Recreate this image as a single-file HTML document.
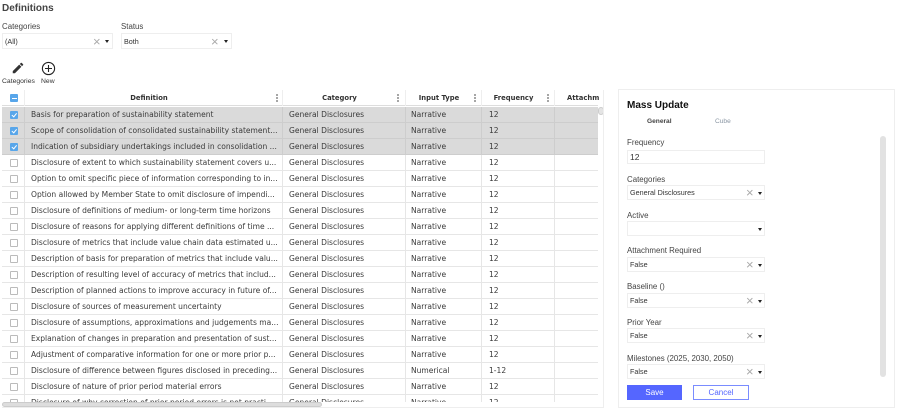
<!DOCTYPE html>
<html><head><meta charset="utf-8">
<style>
html,body{margin:0;padding:0;width:897px;height:412px;overflow:hidden;background:#fff;font-family:"Liberation Sans",sans-serif;color:#333}
.a{position:absolute;white-space:nowrap}
.lbl{font-size:7.9px;color:#444}
.box{position:absolute;background:#fff;border:1px solid #eee;box-sizing:border-box}
.x{position:absolute;color:#aaa;font-size:13px;line-height:10px}
.car{position:absolute;width:0;height:0;border-left:2px solid transparent;border-right:2px solid transparent;border-top:3px solid #222}
#grid{position:absolute;left:2px;top:90px;width:598px;height:312px;overflow:hidden}
.row{position:absolute;left:0;width:596px;height:16px;border-bottom:1px solid #e6e6e6;box-sizing:border-box;font-family:"DejaVu Sans",sans-serif;font-size:7.55px;line-height:16px;color:#3a3a3a}
.row.s{background:#dadada;border-bottom:1px solid #cdcdcd}
.row span{position:absolute;top:0;white-space:nowrap;overflow:hidden}
.c1{left:29px;width:250px}.c2{left:287px}.c3{left:409px}.c4{left:487px}
.v{position:absolute;top:0;width:1px;height:16px;background:#e6e6e6}
.s .v{background:#cdcdcd}
.cb{position:absolute;left:8px;top:4px;width:6px;height:6px;border:1px solid #bbb;border-radius:1px;background:#fff;box-sizing:content-box}
.s .cb{background:#58a6ea;border-color:#58a6ea;color:#fff}
.s .cb:after{content:"";position:absolute;left:2px;top:0;width:1.5px;height:3.5px;border:solid #fff;border-width:0 1px 1px 0;transform:rotate(40deg)}
.hd{position:absolute;top:0;height:16px;font-family:"DejaVu Sans",sans-serif;font-weight:bold;font-size:6.8px;line-height:17px;color:#333;text-align:center;white-space:nowrap}
.dots{position:absolute;top:4px;width:2px;height:8px;background:radial-gradient(circle at 1px 1px,#888 .9px,transparent 1px) 0 0/2px 3px repeat-y}
.sel{position:absolute;left:627px;width:138px;height:15px;background:#fff;border:1px solid #eee;box-sizing:border-box;font-size:7.2px;line-height:13px;padding-left:2px;color:#333}
</style></head><body>
<div class="a" style="left:2px;top:3px;font-size:10px;font-weight:bold;color:#444">Definitions</div>
<div class="a lbl" style="left:2px;top:22px">Categories</div>
<div class="a lbl" style="left:121px;top:22px">Status</div>
<div class="box" style="left:2px;top:33px;width:111px;height:16px"></div>
<div class="a" style="left:5px;top:37px;font-size:7.2px">(All)</div>
<div class="x" style="left:93px;top:37px">×</div><div class="car" style="left:105px;top:40px"></div>
<div class="box" style="left:121px;top:33px;width:111px;height:16px"></div>
<div class="a" style="left:124px;top:37px;font-size:7.2px">Both</div>
<div class="x" style="left:211px;top:37px">×</div><div class="car" style="left:224px;top:40px"></div>

<svg class="a" style="left:11px;top:61px" width="14" height="14" viewBox="0 0 24 24"><path fill="#333" d="M3 17.25V21h3.75L17.81 9.94l-3.75-3.75L3 17.25zM20.71 7.04a1 1 0 0 0 0-1.41l-2.34-2.34a1 1 0 0 0-1.41 0l-1.83 1.83 3.75 3.75 1.83-1.83z"/></svg>
<svg class="a" style="left:41px;top:61px" width="15" height="15" viewBox="0 0 15 15"><circle cx="7.5" cy="7.5" r="6.1" fill="none" stroke="#222" stroke-width="1.1"/><path d="M7.5 4v7M4 7.5h7" stroke="#222" stroke-width="1.1"/></svg>
<div class="a" style="left:2px;top:77.5px;font-size:6.8px;color:#333">Categories</div>
<div class="a" style="left:41px;top:77.5px;font-size:6.8px;color:#333">New</div>

<div id="grid">
<div style="position:absolute;left:0;top:0;width:596px;height:16px;background:#fff;border-bottom:1px solid #ddd;box-sizing:border-box"></div>
<div style="position:absolute;left:8px;top:4px;width:8px;height:8px;background:#58a6ea;border-radius:1px"><div style="position:absolute;left:1.5px;top:3.5px;width:5px;height:1.2px;background:#fff"></div></div>
<div class="v" style="left:22px;background:#eee"></div><div class="v" style="left:280px;background:#eee"></div><div class="v" style="left:403px;background:#eee"></div><div class="v" style="left:479px;background:#eee"></div><div class="v" style="left:552px;background:#eee"></div>
<div class="hd" style="left:23px;width:248px">Definition</div><div class="dots" style="left:274px"></div>
<div class="hd" style="left:281px;width:113px">Category</div><div class="dots" style="left:395px"></div>
<div class="hd" style="left:404px;width:66px">Input Type</div><div class="dots" style="left:472px"></div>
<div class="hd" style="left:480px;width:63px">Frequency</div><div class="dots" style="left:545px"></div>
<div class="hd" style="left:565px;text-align:left">Attachm</div>

<div class="row s" style="top:17px"><i class="cb"></i><b class="v" style="left:22px"></b><b class="v" style="left:280px"></b><b class="v" style="left:403px"></b><b class="v" style="left:479px"></b><b class="v" style="left:552px"></b><span class="c1">Basis for preparation of sustainability statement</span><span class="c2">General Disclosures</span><span class="c3">Narrative</span><span class="c4">12</span></div>
<div class="row s" style="top:33px"><i class="cb"></i><b class="v" style="left:22px"></b><b class="v" style="left:280px"></b><b class="v" style="left:403px"></b><b class="v" style="left:479px"></b><b class="v" style="left:552px"></b><span class="c1">Scope of consolidation of consolidated sustainability statement...</span><span class="c2">General Disclosures</span><span class="c3">Narrative</span><span class="c4">12</span></div>
<div class="row s" style="top:49px"><i class="cb"></i><b class="v" style="left:22px"></b><b class="v" style="left:280px"></b><b class="v" style="left:403px"></b><b class="v" style="left:479px"></b><b class="v" style="left:552px"></b><span class="c1">Indication of subsidiary undertakings included in consolidation ...</span><span class="c2">General Disclosures</span><span class="c3">Narrative</span><span class="c4">12</span></div>
<div class="row" style="top:65px"><i class="cb"></i><b class="v" style="left:22px"></b><b class="v" style="left:280px"></b><b class="v" style="left:403px"></b><b class="v" style="left:479px"></b><b class="v" style="left:552px"></b><span class="c1">Disclosure of extent to which sustainability statement covers u...</span><span class="c2">General Disclosures</span><span class="c3">Narrative</span><span class="c4">12</span></div>
<div class="row" style="top:81px"><i class="cb"></i><b class="v" style="left:22px"></b><b class="v" style="left:280px"></b><b class="v" style="left:403px"></b><b class="v" style="left:479px"></b><b class="v" style="left:552px"></b><span class="c1">Option to omit specific piece of information corresponding to in...</span><span class="c2">General Disclosures</span><span class="c3">Narrative</span><span class="c4">12</span></div>
<div class="row" style="top:97px"><i class="cb"></i><b class="v" style="left:22px"></b><b class="v" style="left:280px"></b><b class="v" style="left:403px"></b><b class="v" style="left:479px"></b><b class="v" style="left:552px"></b><span class="c1">Option allowed by Member State to omit disclosure of impendi...</span><span class="c2">General Disclosures</span><span class="c3">Narrative</span><span class="c4">12</span></div>
<div class="row" style="top:113px"><i class="cb"></i><b class="v" style="left:22px"></b><b class="v" style="left:280px"></b><b class="v" style="left:403px"></b><b class="v" style="left:479px"></b><b class="v" style="left:552px"></b><span class="c1">Disclosure of definitions of medium- or long-term time horizons</span><span class="c2">General Disclosures</span><span class="c3">Narrative</span><span class="c4">12</span></div>
<div class="row" style="top:129px"><i class="cb"></i><b class="v" style="left:22px"></b><b class="v" style="left:280px"></b><b class="v" style="left:403px"></b><b class="v" style="left:479px"></b><b class="v" style="left:552px"></b><span class="c1">Disclosure of reasons for applying different definitions of time ...</span><span class="c2">General Disclosures</span><span class="c3">Narrative</span><span class="c4">12</span></div>
<div class="row" style="top:145px"><i class="cb"></i><b class="v" style="left:22px"></b><b class="v" style="left:280px"></b><b class="v" style="left:403px"></b><b class="v" style="left:479px"></b><b class="v" style="left:552px"></b><span class="c1">Disclosure of metrics that include value chain data estimated u...</span><span class="c2">General Disclosures</span><span class="c3">Narrative</span><span class="c4">12</span></div>
<div class="row" style="top:161px"><i class="cb"></i><b class="v" style="left:22px"></b><b class="v" style="left:280px"></b><b class="v" style="left:403px"></b><b class="v" style="left:479px"></b><b class="v" style="left:552px"></b><span class="c1">Description of basis for preparation of metrics that include valu...</span><span class="c2">General Disclosures</span><span class="c3">Narrative</span><span class="c4">12</span></div>
<div class="row" style="top:177px"><i class="cb"></i><b class="v" style="left:22px"></b><b class="v" style="left:280px"></b><b class="v" style="left:403px"></b><b class="v" style="left:479px"></b><b class="v" style="left:552px"></b><span class="c1">Description of resulting level of accuracy of metrics that includ...</span><span class="c2">General Disclosures</span><span class="c3">Narrative</span><span class="c4">12</span></div>
<div class="row" style="top:193px"><i class="cb"></i><b class="v" style="left:22px"></b><b class="v" style="left:280px"></b><b class="v" style="left:403px"></b><b class="v" style="left:479px"></b><b class="v" style="left:552px"></b><span class="c1">Description of planned actions to improve accuracy in future of...</span><span class="c2">General Disclosures</span><span class="c3">Narrative</span><span class="c4">12</span></div>
<div class="row" style="top:209px"><i class="cb"></i><b class="v" style="left:22px"></b><b class="v" style="left:280px"></b><b class="v" style="left:403px"></b><b class="v" style="left:479px"></b><b class="v" style="left:552px"></b><span class="c1">Disclosure of sources of measurement uncertainty</span><span class="c2">General Disclosures</span><span class="c3">Narrative</span><span class="c4">12</span></div>
<div class="row" style="top:225px"><i class="cb"></i><b class="v" style="left:22px"></b><b class="v" style="left:280px"></b><b class="v" style="left:403px"></b><b class="v" style="left:479px"></b><b class="v" style="left:552px"></b><span class="c1">Disclosure of assumptions, approximations and judgements ma...</span><span class="c2">General Disclosures</span><span class="c3">Narrative</span><span class="c4">12</span></div>
<div class="row" style="top:241px"><i class="cb"></i><b class="v" style="left:22px"></b><b class="v" style="left:280px"></b><b class="v" style="left:403px"></b><b class="v" style="left:479px"></b><b class="v" style="left:552px"></b><span class="c1">Explanation of changes in preparation and presentation of sust...</span><span class="c2">General Disclosures</span><span class="c3">Narrative</span><span class="c4">12</span></div>
<div class="row" style="top:257px"><i class="cb"></i><b class="v" style="left:22px"></b><b class="v" style="left:280px"></b><b class="v" style="left:403px"></b><b class="v" style="left:479px"></b><b class="v" style="left:552px"></b><span class="c1">Adjustment of comparative information for one or more prior p...</span><span class="c2">General Disclosures</span><span class="c3">Narrative</span><span class="c4">12</span></div>
<div class="row" style="top:273px"><i class="cb"></i><b class="v" style="left:22px"></b><b class="v" style="left:280px"></b><b class="v" style="left:403px"></b><b class="v" style="left:479px"></b><b class="v" style="left:552px"></b><span class="c1">Disclosure of difference between figures disclosed in preceding...</span><span class="c2">General Disclosures</span><span class="c3">Numerical</span><span class="c4">1-12</span></div>
<div class="row" style="top:289px"><i class="cb"></i><b class="v" style="left:22px"></b><b class="v" style="left:280px"></b><b class="v" style="left:403px"></b><b class="v" style="left:479px"></b><b class="v" style="left:552px"></b><span class="c1">Disclosure of nature of prior period material errors</span><span class="c2">General Disclosures</span><span class="c3">Narrative</span><span class="c4">12</span></div>
<div class="row" style="top:305px"><i class="cb"></i><b class="v" style="left:22px"></b><b class="v" style="left:280px"></b><b class="v" style="left:403px"></b><b class="v" style="left:479px"></b><b class="v" style="left:552px"></b><span class="c1">Disclosure of why correction of prior period errors is not practi...</span><span class="c2">General Disclosures</span><span class="c3">Narrative</span><span class="c4">12</span></div>
</div>
<div style="position:absolute;left:2px;top:402px;width:320px;height:5px;background:#ddd;border:1px solid #ccc;border-radius:3px;box-sizing:border-box"></div>
<div style="position:absolute;left:598px;top:107px;width:6px;height:8px;background:#e4e4e4;border:1px solid #ccc;border-radius:3px;box-sizing:border-box"></div>
<div style="position:absolute;left:603px;top:90px;width:1px;height:317px;background:#eee"></div>
<div style="position:absolute;left:2px;top:407px;width:602px;height:1px;background:#eee"></div>

<div class="box" style="left:618px;top:89px;width:277px;height:319px"></div>
<div class="a" style="left:627px;top:99.5px;font-size:10px;font-weight:bold;color:#111">Mass Update</div>
<div class="a" style="left:647px;top:117.5px;font-size:6.6px;font-weight:bold;color:#444">General</div>
<div class="a" style="left:715px;top:117.5px;font-size:6.6px;color:#8a96a3">Cube</div>
<div style="position:absolute;left:880px;top:136px;width:6px;height:241px;background:#e2e2e2;border-radius:3px"></div>

<div class="a lbl" style="left:627px;top:137.5px">Frequency</div>
<div class="sel" style="top:150px;height:14px;font-size:8.5px;line-height:13px">12</div>
<div class="a lbl" style="left:627px;top:174.5px">Categories</div>
<div class="sel" style="top:185px">General Disclosures</div><div class="x" style="left:746px;top:188px">×</div><div class="car" style="left:758px;top:192px"></div>
<div class="a lbl" style="left:627px;top:210.5px">Active</div>
<div class="sel" style="top:221px"></div><div class="car" style="left:758px;top:228px"></div>
<div class="a lbl" style="left:627px;top:246px">Attachment Required</div>
<div class="sel" style="top:257px">False</div><div class="x" style="left:746px;top:260px">×</div><div class="car" style="left:758px;top:264px"></div>
<div class="a lbl" style="left:627px;top:282px">Baseline ()</div>
<div class="sel" style="top:293px">False</div><div class="x" style="left:746px;top:296px">×</div><div class="car" style="left:758px;top:300px"></div>
<div class="a lbl" style="left:627px;top:317.5px">Prior Year</div>
<div class="sel" style="top:328px">False</div><div class="x" style="left:746px;top:331px">×</div><div class="car" style="left:758px;top:335px"></div>
<div class="a lbl" style="left:627px;top:353.5px">Milestones (2025, 2030, 2050)</div>
<div class="sel" style="top:364px">False</div><div class="x" style="left:746px;top:367px">×</div><div class="car" style="left:758px;top:371px"></div>

<div style="position:absolute;left:627px;top:385px;width:55px;height:15px;background:#5566ff;color:#fff;font-size:8px;line-height:15px;text-align:center">Save</div>
<div style="position:absolute;left:693px;top:385px;width:56px;height:15px;background:#fff;border:1px solid #7a8cff;box-sizing:border-box;color:#5566ff;font-size:8px;line-height:13px;text-align:center">Cancel</div>
</body></html>
